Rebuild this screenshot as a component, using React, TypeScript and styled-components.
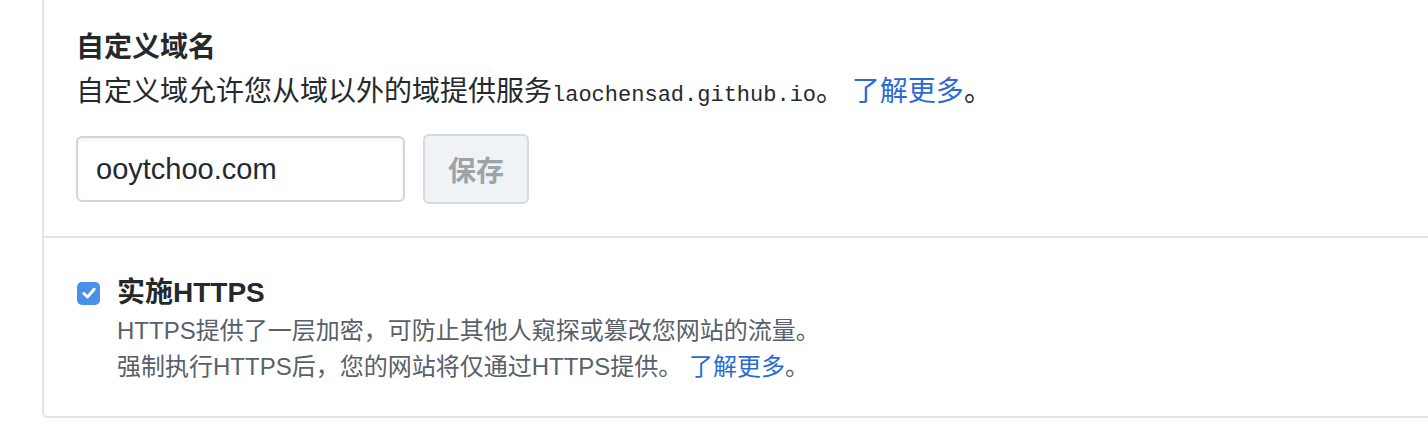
import React from "react";
import styled, { createGlobalStyle } from "styled-components";

const GlobalStyle = createGlobalStyle`
  html, body {
    margin: 0;
    padding: 0;
    background: #ffffff;
  }
  body {
    font-family: "Liberation Sans", "Noto Sans CJK SC", sans-serif;
    color: #24292e;
    -webkit-font-smoothing: antialiased;
  }
`;

const Page = styled.div`
  padding-left: 42px;
  width: 1386px;
  overflow: hidden;
`;

const Panel = styled.div`
  border-left: 2px solid #e1e4e8;
  border-bottom: 2px solid #e1e4e8;
  border-bottom-left-radius: 6px;
`;

const Section = styled.section<{ $top: number; $bottom: number }>`
  padding: ${(p) => p.$top}px 32px ${(p) => p.$bottom}px 32px;
  & + & {
    border-top: 2px solid #e1e4e8;
  }
`;

const Title = styled.div`
  font-size: 28px;
  font-weight: 700;
  line-height: 44px;
  color: #24292e;
`;

const Desc = styled.p`
  margin: 0;
  font-size: 28px;
  line-height: 44px;
  color: #24292e;
`;

const Code = styled.code`
  font-family: "Liberation Mono", "DejaVu Sans Mono", monospace;
  font-size: 22px;
`;

const Link = styled.a`
  color: #2a6bd1;
  text-decoration: none;
`;

const FormRow = styled.div`
  display: flex;
  align-items: center;
  gap: 18px;
  margin-top: 16px;
`;

const TextInput = styled.input`
  box-sizing: border-box;
  width: 329px;
  height: 66px;
  padding: 0 18px;
  border: 2px solid #d1d5da;
  border-radius: 6px;
  font-family: "Liberation Sans", "Noto Sans CJK SC", sans-serif;
  font-size: 29px;
  color: #24292e;
  background: #ffffff;
  box-shadow: inset 0 2px 4px rgba(27, 31, 35, 0.06);
  outline: none;
`;

const SaveButton = styled.button`
  box-sizing: border-box;
  width: 106px;
  height: 70px;
  padding: 0;
  border: 2px solid #d6d9dd;
  border-radius: 6px;
  background: #eff3f6;
  font-family: "Liberation Sans", "Noto Sans CJK SC", sans-serif;
  font-size: 28px;
  font-weight: 600;
  color: #9ea3a8;
  cursor: default;
`;

const CheckRow = styled.div`
  display: flex;
  align-items: center;
  gap: 17px;
`;

const CheckBox = styled.span`
  display: inline-flex;
  align-items: center;
  justify-content: center;
  width: 23px;
  height: 23px;
  margin-left: 1px;
  border-radius: 5px;
  background: #4a90e8;
  flex-shrink: 0;
`;

const CheckTitle = styled.div`
  font-size: 28px;
  font-weight: 700;
  line-height: 40px;
  color: #24292e;
`;

const Note = styled.p`
  margin: 0;
  padding-left: 41px;
  font-size: 24px;
  line-height: 36px;
  color: #586069;
`;

export default function App() {
  return (
    <>
      <GlobalStyle />
      <Page>
        <Panel>
          <Section $top={26} $bottom={32}>
            <Title>自定义域名</Title>
            <Desc>
              自定义域允许您从域以外的域提供服务<Code>laochensad.github.io</Code>。{" "}
              <Link href="#">了解更多</Link>。
            </Desc>
            <FormRow>
              <TextInput type="text" defaultValue="ooytchoo.com" />
              <SaveButton type="button">保存</SaveButton>
            </FormRow>
          </Section>
          <Section $top={35} $bottom={31}>
            <CheckRow>
              <CheckBox>
                <svg width="18" height="18" viewBox="0 0 16 16" fill="none">
                  <path
                    d="M3.4 8.4 L6.6 11.6 L12.6 4.6"
                    stroke="#ffffff"
                    strokeWidth="2.6"
                    strokeLinecap="round"
                    strokeLinejoin="round"
                  />
                </svg>
              </CheckBox>
              <CheckTitle>实施HTTPS</CheckTitle>
            </CheckRow>
            <Note>HTTPS提供了一层加密，可防止其他人窥探或篡改您网站的流量。</Note>
            <Note>
              强制执行HTTPS后，您的网站将仅通过HTTPS提供。 <Link href="#">了解更多</Link>。
            </Note>
          </Section>
        </Panel>
      </Page>
    </>
  );
}
